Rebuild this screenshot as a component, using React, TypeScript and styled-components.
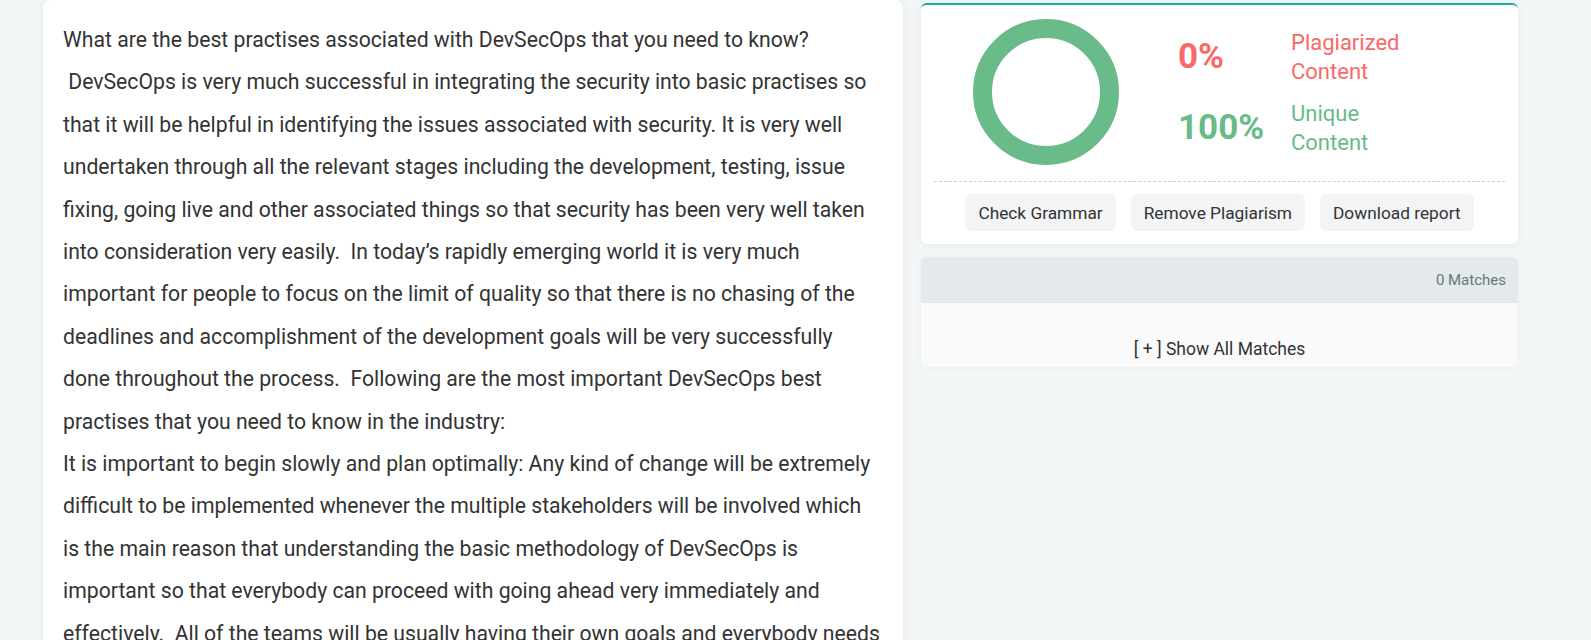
import React from 'react'
import styled, { createGlobalStyle } from 'styled-components'

const GlobalStyle = createGlobalStyle`
  * { box-sizing: border-box; }
  html, body {
    margin: 0;
    padding: 0;
    background: #f3f6f6;
    font-family: Roboto, "Liberation Sans", Arial, sans-serif;
    color: #333;
    overflow: hidden;
  }
`

const Page = styled.div`
  display: flex;
  align-items: flex-start;
  gap: 18px;
  padding-left: 43px;
  height: 640px;
  overflow: hidden;
`

const ArticleCard = styled.div`
  width: 860px;
  height: 660px;
  background: #fff;
  border-radius: 8px;
  box-shadow: 0 0 8px rgba(0, 0, 0, 0.05);
  padding: 19px 21px 20px 20px;
`

const Paragraph = styled.p`
  margin: 0;
  font-size: 21.2px;
  line-height: 2;
  color: #333;
  white-space: pre-wrap;
`

const Side = styled.div`
  width: 597px;
  display: flex;
  flex-direction: column;
  gap: 13px;
  padding-top: 3px;
`

const ResultCard = styled.div`
  background: #fff;
  border-top: 2px solid #1fa7a6;
  border-radius: 6px;
  box-shadow: 0 0 8px rgba(0, 0, 0, 0.06);
  padding: 14px 13px 13px;
`

const Summary = styled.div`
  display: flex;
  align-items: center;
  padding-left: 39px;
  padding-bottom: 16px;
  border-bottom: 1px dashed #cfcfcf;
`

const Donut = styled.svg`
  display: block;
  flex-shrink: 0;
  margin-right: 59px;
`

const Stats = styled.div`
  display: grid;
  grid-template-columns: 113px auto;
  grid-auto-rows: 58px;
  row-gap: 13px;
  align-items: center;
`

const Percent = styled.div<{ $color: string }>`
  font-size: 35px;
  font-weight: 700;
  line-height: 1;
  color: ${({ $color }) => $color};
`

const Label = styled.div<{ $color: string }>`
  font-size: 22px;
  line-height: 29px;
  color: ${({ $color }) => $color};
`

const Actions = styled.div`
  display: flex;
  justify-content: center;
  gap: 15px;
  padding-top: 12px;
`

const ActionButton = styled.button`
  height: 37px;
  padding: 0 13px;
  border: none;
  border-radius: 6px;
  background: #f2f4f6;
  font-family: inherit;
  font-size: 17.3px;
  color: #333;
  cursor: pointer;
`

const MatchesCard = styled.div`
  border-radius: 6px;
  overflow: hidden;
  background: #fafafa;
  box-shadow: 0 0 6px rgba(0, 0, 0, 0.04);
`

const MatchesHeader = styled.div`
  height: 46px;
  background: #e4e9ec;
  display: flex;
  align-items: center;
  justify-content: flex-end;
  padding-right: 12px;
  font-size: 15px;
  color: #67767e;
`

const MatchesBody = styled.div`
  padding: 36px 12px 8px;
  text-align: center;
  font-size: 17.5px;
  line-height: 20px;
  color: #333;
`

const GREEN = '#69bb89'
const RED = '#fa6868'

const App = () => {
  return (
    <>
      <GlobalStyle />
      <Page>
        <ArticleCard>
          <Paragraph>What are the best practises associated with DevSecOps that you need to know?</Paragraph>
          <Paragraph>
            {' DevSecOps is very much successful in integrating the security into basic practises so that it will be helpful in identifying the issues associated with security. It is very well undertaken through all the relevant stages including the development, testing, issue fixing, going live and other associated things so that security has been very well taken into consideration very easily.  In today’s rapidly emerging world it is very much important for people to focus on the limit of quality so that there is no chasing of the deadlines and accomplishment of the development goals will be very successfully done throughout the process.  Following are the most important DevSecOps best practises that you need to know in the industry:'}
          </Paragraph>
          <Paragraph>
            {'It is important to begin slowly and plan optimally: Any kind of change will be extremely difficult to be implemented whenever the multiple stakeholders will be involved which is the main reason that understanding the basic methodology of DevSecOps is important so that everybody can proceed with going ahead very immediately and effectively.  All of the teams will be usually having their own goals and everybody needs to be on the same page.'}
          </Paragraph>
        </ArticleCard>

        <Side>
          <ResultCard>
            <Summary>
              <Donut width="146" height="146" viewBox="0 0 146 146">
                <circle cx="73" cy="73" r="63.5" fill="none" stroke={GREEN} strokeWidth="19" />
              </Donut>
              <Stats>
                <Percent $color={RED}>0%</Percent>
                <Label $color={RED}>Plagiarized<br />Content</Label>
                <Percent $color={GREEN}>100%</Percent>
                <Label $color={GREEN}>Unique<br />Content</Label>
              </Stats>
            </Summary>
            <Actions>
              <ActionButton>Check Grammar</ActionButton>
              <ActionButton>Remove Plagiarism</ActionButton>
              <ActionButton>Download report</ActionButton>
            </Actions>
          </ResultCard>

          <MatchesCard>
            <MatchesHeader>0 Matches</MatchesHeader>
            <MatchesBody>[ + ] Show All Matches</MatchesBody>
          </MatchesCard>
        </Side>
      </Page>
    </>
  )
}

export default App
